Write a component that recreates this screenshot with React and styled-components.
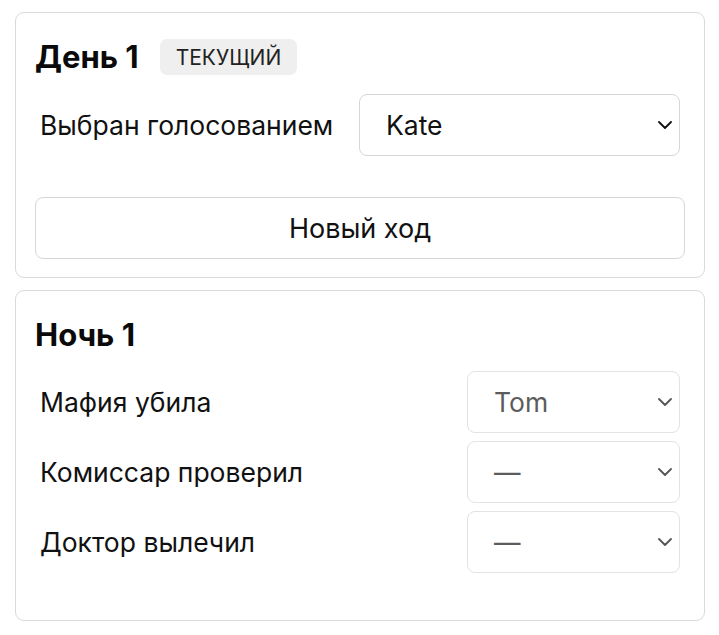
import React from "react";
import styled, { createGlobalStyle } from "styled-components";

const GlobalStyle = createGlobalStyle`
  html, body {
    margin: 0;
    padding: 0;
    background: #ffffff;
  }
  body {
    font-family: Inter, "Noto Sans", "Liberation Sans", sans-serif;
    color: #111111;
  }
`;

const Chevron = ({ color }) => (
  <svg width="14" height="8" viewBox="0 0 14 8" fill="none">
    <path
      d="M1 1 L7 7 L13 1"
      stroke={color}
      strokeWidth="1.8"
      strokeLinecap="round"
      strokeLinejoin="round"
    />
  </svg>
);

const Select = ({ value, disabled }) => (
  <SelectBox disabled={disabled}>
    <SelectValue disabled={disabled}>{value}</SelectValue>
    <Chevron color={disabled ? "#555555" : "#111111"} />
  </SelectBox>
);

const App = () => {
  return (
    <>
      <GlobalStyle />
      <Page>
        <Card>
          <CardHeader>
            <Title>День 1</Title>
            <Badge>ТЕКУЩИЙ</Badge>
          </CardHeader>
          <Row>
            <Label>Выбран голосованием</Label>
            <Select value="Kate" />
          </Row>
          <Button>Новый ход</Button>
        </Card>

        <Card night>
          <CardHeader>
            <Title>Ночь 1</Title>
          </CardHeader>
          <Rows>
            <Row narrow>
              <Label>Мафия убила</Label>
              <Select value="Tom" disabled />
            </Row>
            <Row narrow>
              <Label>Комиссар проверил</Label>
              <Select value="—" disabled />
            </Row>
            <Row narrow>
              <Label>Доктор вылечил</Label>
              <Select value="—" disabled />
            </Row>
          </Rows>
        </Card>
      </Page>
    </>
  );
};

const Page = styled.div`
  display: flex;
  flex-direction: column;
  gap: 12px;
  padding: 12px 14px 14px 15px;
`;

const Card = styled.section`
  border: 1px solid #d9d9d9;
  border-radius: 9px;
  padding: ${(p) => (p.night ? "26px 19px 47px 19px" : "26px 19px 18px 19px")};
  display: flex;
  flex-direction: column;
`;

const CardHeader = styled.div`
  display: flex;
  align-items: center;
  gap: 21px;
  height: 36px;
`;

const Title = styled.h2`
  margin: 0;
  font-size: 31px;
  font-weight: 700;
  letter-spacing: 0;
  line-height: 36px;
  color: #0a0a0a;
`;

const Badge = styled.span`
  background: #efefef;
  border-radius: 7px;
  height: 36px;
  padding: 0 16px;
  display: flex;
  align-items: center;
  font-size: 21px;
  color: #222222;
`;

const Rows = styled.div`
  display: flex;
  flex-direction: column;
  gap: 8px;
  margin-top: 18px;
`;

const Row = styled.div`
  display: grid;
  grid-template-columns: 1fr ${(p) => (p.narrow ? "213px" : "321px")};
  align-items: center;
  margin-top: ${(p) => (p.narrow ? "0" : "19px")};
  padding: 0 5px;
`;

const Label = styled.span`
  font-size: 26.5px;
  color: #111111;
`;

const SelectBox = styled.div`
  height: 62px;
  box-sizing: border-box;
  border: 1px solid ${(p) => (p.disabled ? "#e3e3e3" : "#d6d6d6")};
  border-radius: 8px;
  background: #ffffff;
  display: flex;
  align-items: center;
  justify-content: space-between;
  padding: 0 7px 0 26px;
`;

const SelectValue = styled.span`
  font-size: 26.5px;
  color: ${(p) => (p.disabled ? "#5c5c5c" : "#111111")};
`;

const Button = styled.button`
  margin-top: 41px;
  height: 62px;
  border: 1px solid #d6d6d6;
  border-radius: 8px;
  background: #ffffff;
  font-family: inherit;
  font-size: 27px;
  color: #111111;
  cursor: pointer;
`;

export default App;
